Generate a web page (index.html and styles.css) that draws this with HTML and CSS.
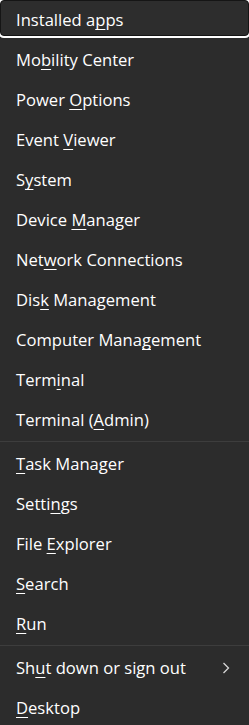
FILE: index.html
```html
<!DOCTYPE html>
<html lang="en">
<head>
<meta charset="utf-8">
<title>Quick Link menu</title>
<link rel="stylesheet" href="styles.css">
</head>
<body>
<nav class="menu">
  <div class="item focused"><span class="label">Installed a<u>p</u>ps</span></div>
  <div class="item"><span class="label">Mo<u>b</u>ility Center</span></div>
  <div class="item"><span class="label">Power <u>O</u>ptions</span></div>
  <div class="item"><span class="label">Event <u>V</u>iewer</span></div>
  <div class="item"><span class="label">S<u>y</u>stem</span></div>
  <div class="item"><span class="label">Device <u>M</u>anager</span></div>
  <div class="item"><span class="label">Net<u>w</u>ork Connections</span></div>
  <div class="item"><span class="label">Dis<u>k</u> Management</span></div>
  <div class="item"><span class="label">Computer Mana<u>g</u>ement</span></div>
  <div class="item"><span class="label">Term<u>i</u>nal</span></div>
  <div class="item"><span class="label">Terminal (<u>A</u>dmin)</span></div>
  <div class="sep"></div>
  <div class="item"><span class="label"><u>T</u>ask Manager</span></div>
  <div class="item"><span class="label">Setti<u>n</u>gs</span></div>
  <div class="item"><span class="label">File <u>E</u>xplorer</span></div>
  <div class="item"><span class="label"><u>S</u>earch</span></div>
  <div class="item"><span class="label"><u>R</u>un</span></div>
  <div class="sep"></div>
  <div class="item has-sub"><span class="label">Sh<u>u</u>t down or sign out</span>
    <svg class="chev" width="8" height="12" viewBox="0 0 8 12"><path d="M1.5 1 L6.5 6 L1.5 11" fill="none" stroke="#d6d6d6" stroke-width="1.3"/></svg>
  </div>
  <div class="item"><span class="label"><u>D</u>esktop</span></div>
</nav>
</body>
</html>
```
FILE: styles.css
```css
html, body {
  margin: 0;
  padding: 0;
  background: #2c2c2c;
}
body {
  width: 249px;
  height: 725px;
  overflow: hidden;
  font-family: "Open Sans", "Noto Sans", sans-serif;
  color: #ffffff;
}
.menu {
  display: flex;
  flex-direction: column;
}
.item {
  position: relative;
  box-sizing: border-box;
  height: 40px;
  display: flex;
  align-items: center;
  padding: 0 19px 1px 16px;
  font-size: 16.6px;
  white-space: nowrap;
}
.label {
  display: block;
}
.item u {
  text-decoration: underline;
  text-decoration-thickness: 1px;
  text-underline-offset: 3px;
  text-decoration-skip-ink: none;
}
.focused {
  z-index: 0;
  isolation: isolate;
}
.focused::before {
  content: "";
  position: absolute;
  left: 0;
  right: 0;
  top: 0;
  height: 34px;
  border: 1px solid #151515;
  border-radius: 4px;
  box-shadow: 0 0 0 2px #ffffff;
  background: #2d2d2d;
  z-index: -1;
}
.sep {
  height: 1px;
  margin: 1px 0 2px;
  background: #3d3d3d;
}
.has-sub {
  justify-content: space-between;
}
.chev {
  display: block;
}
```
